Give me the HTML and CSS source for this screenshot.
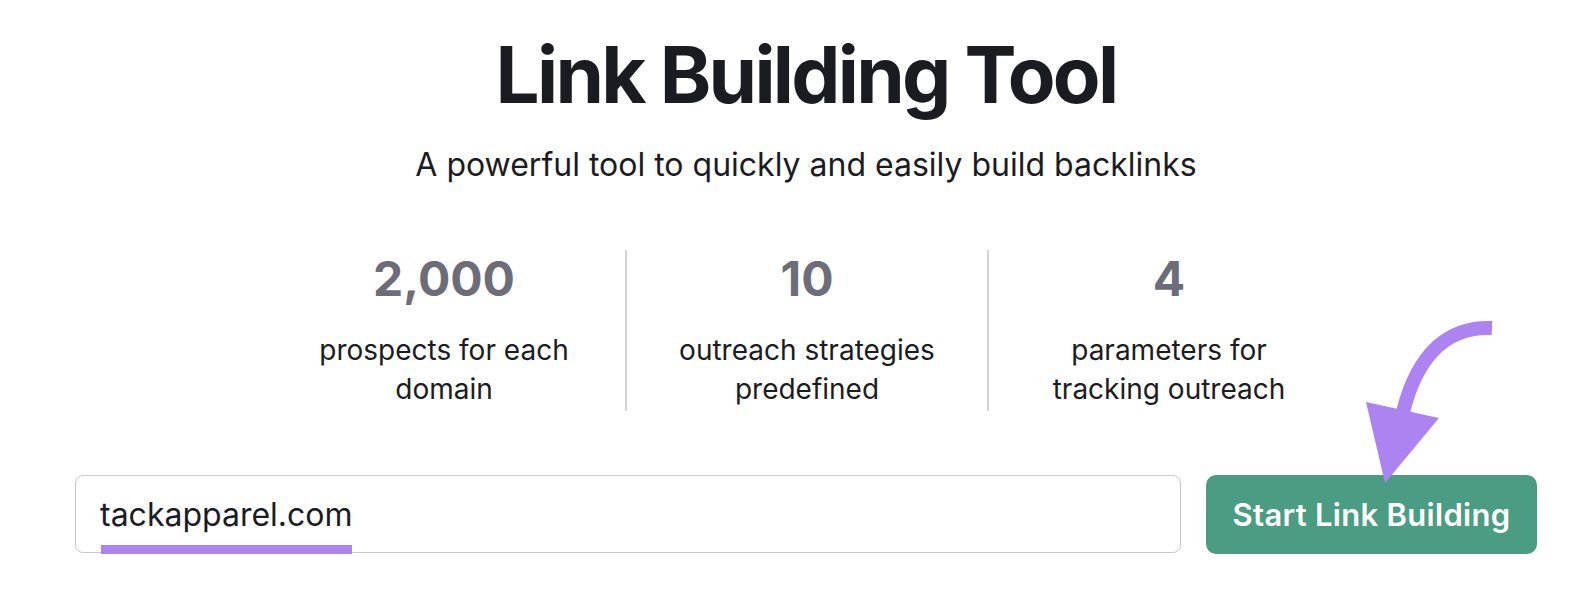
FILE: index.html
```html
<!DOCTYPE html>
<html lang="en">
<head>
    <meta charset="UTF-8">
    <meta name="viewport" content="width=device-width, initial-scale=1.0">
    <title>Link Building Tool</title>
    <link rel="stylesheet" href="styles.css">
</head>
<body>

    <div class="page">
        <h1 class="title">Link Building Tool</h1>
        <p class="subtitle">A powerful tool to quickly and easily build backlinks</p>

        <div class="stats">
            <div class="stat">
                <div class="stat-num">2,000</div>
                <div class="stat-label">prospects for each<br>domain</div>
            </div>
            <div class="stat">
                <div class="stat-num">10</div>
                <div class="stat-label">outreach strategies<br>predefined</div>
            </div>
            <div class="stat">
                <div class="stat-num">4</div>
                <div class="stat-label">parameters for<br>tracking outreach</div>
            </div>
        </div>

        <form class="search">
            <div class="field">
                <input type="text" class="domain" value="tackapparel.com">
                <span class="mark"></span>
            </div>
            <button type="submit" class="start">Start Link Building</button>
        </form>

        <svg class="arrow" viewBox="0 0 1592 614" width="1592" height="614">
            <path d="M1492 328 C1450 326 1418 352 1403 412" fill="none" stroke="#ad82f1" stroke-width="14"/>
            <polygon points="1366,402 1439,418 1385,483" fill="#ad82f1"/>
        </svg>
    </div>

</body>
</html>
```

FILE: styles.css
```css
body {
    margin: 0;
    background: white;
    font-family: 'Inter', 'Noto Sans', sans-serif;
    color: #1b1c22;
}
.page {
    position: relative;
    width: 1592px;
    height: 614px;
    padding: 28px 55px 0 75px;
    box-sizing: border-box;
    display: flex;
    flex-direction: column;
    align-items: center;
}
.title {
    margin: 0;
    font-size: 78px;
    line-height: 94px;
    font-weight: 700;
    letter-spacing: -2.7px;
}
.subtitle {
    margin: 24px 0 0;
    font-size: 32px;
    line-height: 38px;
}
.stats {
    display: flex;
    margin-top: 66px;
}
.stat {
    width: 362px;
    height: 161px;
    text-align: center;
    box-sizing: border-box;
}
.stat + .stat {
    border-left: 2px solid #d2d2d4;
}
.stat-num {
    font-size: 48px;
    line-height: 58px;
    font-weight: 700;
    color: #6c6d78;
}
.stat-label {
    margin-top: 23px;
    font-size: 28px;
    line-height: 39px;
}
.search {
    align-self: stretch;
    display: flex;
    gap: 25px;
    margin-top: 64px;
}
.field {
    position: relative;
    flex: 1;
}
.domain {
    width: 100%;
    height: 78px;
    box-sizing: border-box;
    padding: 0 24px;
    border: 1.5px solid #c9c9cc;
    border-radius: 8px;
    font-family: inherit;
    font-size: 32px;
    color: #1b1c22;
    outline: none;
}
.mark {
    position: absolute;
    left: 26px;
    top: 70px;
    width: 251px;
    height: 9px;
    background: #ad82f1;
}
.start {
    width: 331px;
    height: 79px;
    border: none;
    border-radius: 10px;
    background: #4a9c83;
    color: white;
    font-family: inherit;
    font-size: 31px;
    font-weight: 600;
    letter-spacing: 0.3px;
    cursor: pointer;
}
.arrow {
    position: absolute;
    left: 0;
    top: 0;
    pointer-events: none;
}
```
